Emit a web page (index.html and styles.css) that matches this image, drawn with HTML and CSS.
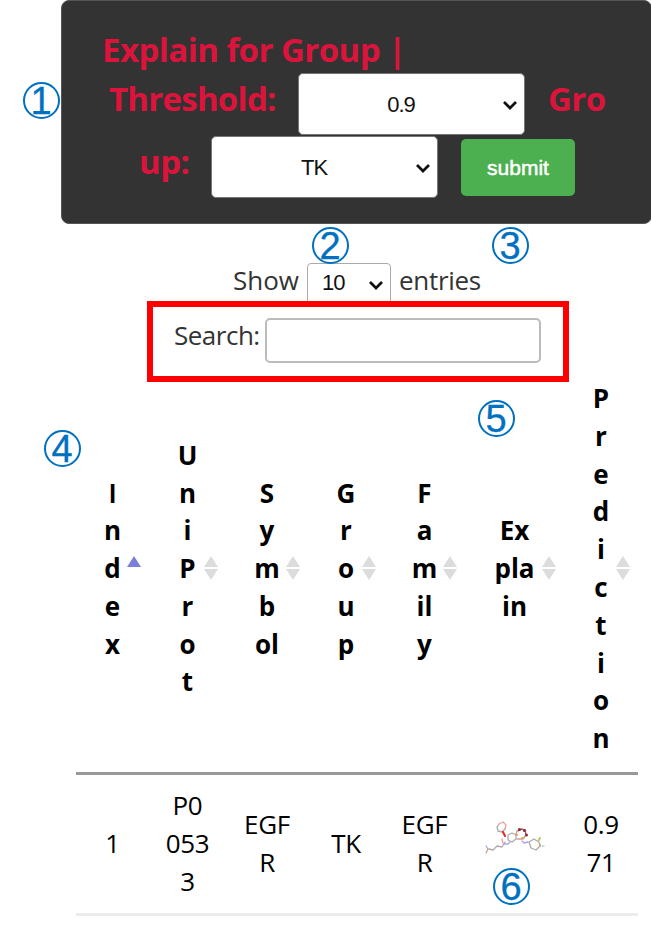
FILE: index.html
```html
<!DOCTYPE html>
<html lang="en">
<head>
<meta charset="utf-8">
<title>Explain for Group</title>
<link rel="stylesheet" href="styles.css">
</head>
<body>
<main class="page">
  <form class="panel">
    <div class="line line-title"><span class="t-title">Explain for Group |</span></div>
    <div class="line line-threshold">
      <span class="t-threshold">Threshold:</span>
      <div class="select">
        <span>0.9</span>
        <svg class="chevron" viewBox="0 0 16 10"><path d="M2 2l6 6 6-6"/></svg>
      </div>
      <span class="t-gro">Gro</span>
    </div>
    <div class="line line-group">
      <span class="t-up">up:</span>
      <div class="select select-tk">
        <span>TK</span>
        <svg class="chevron" viewBox="0 0 16 10"><path d="M2 2l6 6 6-6"/></svg>
      </div>
      <button class="submit" type="button">submit</button>
    </div>
  </form>

  <div class="length">
    <span class="t-show">Show</span>
    <div class="select-small"><span>10</span><svg class="chevron" viewBox="0 0 16 10"><path d="M2 2l6 6 6-6"/></svg></div>
    <span class="t-entries">entries</span>
  </div>

  <div class="filter">
    <label class="t-search" for="q">Search:</label>
    <input id="q" type="text">
  </div>

  <table class="results">
    <colgroup><col class="c1"><col class="c2"><col class="c3"><col class="c4"><col class="c5"><col class="c6"><col class="c7"></colgroup>
    <thead>
      <tr>
        <th><span class="plain-i">I</span><br>n<br>d<br>e<br>x<svg class="sort" viewBox="0 0 14 24"><path class="on" d="M7 0l7 11H0z"/></svg></th>
        <th>U<br>n<br>i<br>P<br>r<br>o<br>t<svg class="sort" viewBox="0 0 14 24"><path d="M7 0l7 11H0zM0 13h14l-7 11z"/></svg></th>
        <th>S<br>y<br>m<br>b<br>ol<svg class="sort" viewBox="0 0 14 24"><path d="M7 0l7 11H0zM0 13h14l-7 11z"/></svg></th>
        <th>G<br>r<br>o<br>u<br>p<svg class="sort" viewBox="0 0 14 24"><path d="M7 0l7 11H0zM0 13h14l-7 11z"/></svg></th>
        <th>F<br>a<br>m<br>il<br>y<svg class="sort" viewBox="0 0 14 24"><path d="M7 0l7 11H0zM0 13h14l-7 11z"/></svg></th>
        <th>Ex<br>pla<br>in<svg class="sort" viewBox="0 0 14 24"><path d="M7 0l7 11H0zM0 13h14l-7 11z"/></svg></th>
        <th>P<br>r<br>e<br>d<br>i<br>c<br>t<br>i<br>o<br>n<svg class="sort" viewBox="0 0 14 24"><path d="M7 0l7 11H0zM0 13h14l-7 11z"/></svg></th>
      </tr>
    </thead>
    <tbody>
      <tr>
        <td>1</td>
        <td>P0<br>053<br>3</td>
        <td>EGF<br>R</td>
        <td>TK</td>
        <td>EGF<br>R</td>
        <td>
          <svg class="molecule" viewBox="484 822 64 36">
            <g fill="none" stroke-width="1.3" stroke-linecap="round" stroke-linejoin="round">
              <path stroke="#b0aaa6" d="M499 825l-2 3 1 4 4 1 3-3M489 850l4 1 4-4 5 1 3-5M508 836l4-2 4 2v4l-4 3-4-2zM529 843l5-3 5 3 1 4-4 4-5-2z"/>
              <path stroke="#eda0a0" d="M499 825l4-2 3 3-1 4M503 844l-1-4"/>
              <path stroke="#a9a4f0" d="M486 847l2 3M504 845l4 0 2-2M522 842l2 2 4-1"/>
              <path stroke="#c4a58c" d="M486 854l2-4M516 836l1-4M526 836l-3 4-6 0"/>
              <path stroke="#b5cb61" stroke-width="2" d="M539 841l1-2"/>
              <path stroke="#a6d6d5" d="M542 847h2"/>
              <path stroke="#e8a070" stroke-width="2" d="M516 835l1 1M522 839h1M540 846v1"/>
              <path stroke="#9b6069" d="M518 832l3-2 4 1 1 5"/>
              <path stroke="#e22" stroke-width="2" d="M503 833l2 4"/>
            </g>
            <g fill="#8d2e3c"><circle cx="519.5" cy="830.5" r="1.6"/><circle cx="524.5" cy="831.5" r="1.6"/><circle cx="526.5" cy="836" r="1.5"/></g>
          </svg>
        </td>
        <td>0.9<br>71</td>
      </tr>
    </tbody>
  </table>

  <div class="highlight"></div>
  <span class="badge b1">1</span>
  <span class="badge b2">2</span>
  <span class="badge b3">3</span>
  <span class="badge b4">4</span>
  <span class="badge b5">5</span>
  <span class="badge b6">6</span>
</main>
</body>
</html>
```
FILE: styles.css
```css
* { box-sizing: border-box; }
body {
  margin: 0;
  background: #fff;
  font-family: "Open Sans", "Noto Sans", sans-serif;
}
.page {
  position: relative;
  width: 651px;
  height: 931px;
  overflow: hidden;
}
.panel {
  margin-left: 61px;
  width: 591px;
  height: 224px;
  padding-top: 28px;
  background: #333;
  border: 1px solid #555;
  border-radius: 8px;
  color: #dc143c;
  font-size: 33px;
  font-weight: 700;
}
.line { display: flex; white-space: nowrap; }
.line-title { height: 44px; line-height: 42px; padding-left: 40px; }
.line-threshold { height: 63px; line-height: 51px; padding-left: 47px; }
.line-group { height: 63px; line-height: 51px; padding-left: 77px; }
.t-title { letter-spacing: -0.55px; }
.t-threshold { width: 189px; letter-spacing: -0.75px; }
.t-gro { margin-left: 23px; letter-spacing: -0.6px; }
.t-up { width: 72px; letter-spacing: -0.5px; }
.select {
  position: relative;
  width: 227px;
  height: 62px;
  flex: none;
  border: 1px solid #767676;
  border-radius: 5px;
  background: #fff;
  color: #111;
  font: 400 22px/61px "Liberation Sans", sans-serif;
  text-align: center;
}
.select span { display: block; padding-right: 21px; letter-spacing: -1px; }
.chevron {
  position: absolute;
  right: 6px;
  top: 26px;
  width: 16px;
  height: 10px;
  fill: none;
  stroke: #111;
  stroke-width: 2.7;
}
.submit {
  width: 114px;
  height: 57px;
  margin: 3px 0 0 23px;
  padding: 0;
  border: 0;
  border-radius: 5px;
  background: #4caf50;
  color: #fff;
  font: 400 21px "Liberation Sans", sans-serif;
  -webkit-text-stroke: 0.5px #fff;
}
.length {
  display: flex;
  height: 80px;
  padding: 39px 0 0 233px;
  color: #333;
  font-size: 26px;
  line-height: 34px;
}
.t-show { width: 74px; }
.select-small {
  position: relative;
  width: 84px;
  height: 45px;
  padding-left: 14px;
  border: 1px solid #aaa;
  border-radius: 4px;
  color: #111;
  font: 400 22px/38px "Liberation Sans", sans-serif;
  letter-spacing: -1px;
}
.select-small .chevron { top: 16px; right: 6px; }
.t-entries { margin-left: 8px; letter-spacing: -0.3px; }
.filter {
  position: relative;
  display: flex;
  height: 75px;
  padding: 14px 0 0 174px;
  background: #fff;
  color: #333;
  font-size: 26px;
  line-height: 34px;
}
.t-search { width: 91px; letter-spacing: -0.5px; }
.filter input {
  width: 276px;
  height: 45px;
  border: 2px solid #bbb;
  border-radius: 5px;
  background: #fff;
}
.results {
  width: 562px;
  margin-left: 76px;
  table-layout: fixed;
  border-collapse: separate;
  border-spacing: 0;
  color: #000;
  font-size: 26px;
  line-height: 37.8px;
  text-align: center;
}
.c1 { width: 73px; }
.c2 { width: 77px; }
.c3 { width: 82px; }
.c4 { width: 76px; }
.c5 { width: 81px; }
.c6 { width: 99px; }
.c7 { width: 74px; }
.results th {
  position: relative;
  height: 396px;
  padding: 1px 0 14px;
  vertical-align: middle;
  border-bottom: 3px solid #999;
  font-weight: 700;
}
.plain-i { font-family: Lato, sans-serif; line-height: 1; }
.results td {
  height: 141px;
  padding: 3px 0 3px;
  vertical-align: middle;
  border-bottom: 3px solid #ececec;
  letter-spacing: -0.3px;
}
.sort {
  position: absolute;
  right: 8px;
  top: 177px;
  width: 14px;
  height: 24px;
  fill: #dcdcdc;
}
.sort .on { fill: #7b7fdc; }
.molecule { display: block; width: 64px; height: 36px; margin: -11px 0 0 19px; }
.highlight {
  position: absolute;
  left: 147px;
  top: 301px;
  width: 422px;
  height: 81px;
  border: 6px solid #f00;
}
.badge {
  position: absolute;
  width: 37px;
  height: 37px;
  border: 2px solid #0070c0;
  border-radius: 50%;
  color: #0070c0;
  font: 400 38px/34px "Liberation Sans", sans-serif;
  text-align: center;
  text-indent: -1px;
  -webkit-text-stroke: 0.3px #0070c0;
}
.b1 { left: 23px; top: 82px; }
.b2 { left: 312px; top: 227px; }
.b3 { left: 492px; top: 227px; }
.b4 { left: 44px; top: 430px; }
.b5 { left: 478px; top: 400px; }
.b6 { left: 493px; top: 868px; }
```
